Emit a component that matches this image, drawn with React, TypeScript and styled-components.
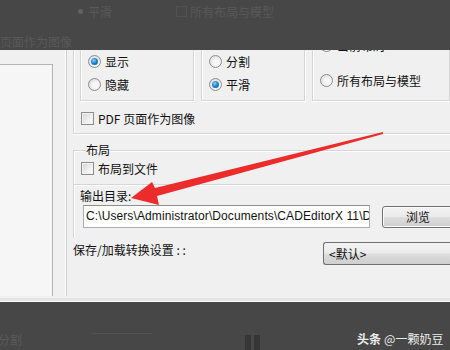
import * as React from 'react';
import styled, { createGlobalStyle } from 'styled-components';

const GlobalStyle = createGlobalStyle`
  html, body { margin: 0; padding: 0; background: #f0f0f0; }
`;

const Page = styled.div`
  position: relative;
  width: 450px;
  height: 350px;
  overflow: hidden;
  display: flex;
  flex-direction: column;
  font-family: "Noto Sans CJK SC", "Liberation Sans", sans-serif;
  font-size: 12px;
  color: #111;
  background: #f0f0f0;
`;

const TopBand = styled.div`
  height: 50px;
  flex: none;
  background: #474747;
  color: #595959;
  display: flex;
  flex-direction: column;
  overflow: hidden;
`;

const BandLine = styled.div<{ $top: number; $left: number }>`
  display: flex;
  align-items: center;
  height: 16px;
  margin-top: ${p => p.$top}px;
  padding-left: ${p => p.$left}px;
  white-space: nowrap;
`;

const FaintDot = styled.span`
  width: 5px;
  height: 5px;
  border-radius: 50%;
  background: #626262;
  margin-right: 5px;
`;

const FaintBox = styled.span`
  width: 9px;
  height: 9px;
  border: 1px solid #525252;
  margin-right: 3px;
`;

const Spacer = styled.span<{ $w: number }>`
  display: inline-block;
  width: ${p => p.$w}px;
`;

const Middle = styled.div`
  flex: none;
  height: 251px;
  display: flex;
  border-bottom: 1px solid #fbfbfb;
  box-shadow: inset 0 -3px 0 #e4e4e4;
  overflow: hidden;
`;

const LeftPane = styled.div`
  width: 52px;
  flex: none;
  margin: 14px 0 5px;
  background: #f6f6f6;
  border-top: 1px solid #b4b4b4;
  border-right: 1px solid #b4b4b4;
`;

const Splitter = styled.div`
  width: 13px;
  flex: none;
  margin-bottom: 5px;
  border-right: 1px solid #cdcdcd;
  box-shadow: inset -1px 0 0 #ffffff;
`;

const Content = styled.div`
  flex: 1;
  display: flex;
  flex-direction: column;
  padding-left: 6px;
  min-width: 0;
`;

const GroupA = styled.div`
  border-left: 1px solid #d5d5d5;
  border-bottom: 1px solid #d5d5d5;
  box-shadow: inset 1px 0 0 #fff, 0 1px 0 #fff;
  padding: 0 0 3px 6px;
`;

const BoxRow = styled.div`
  display: flex;
  gap: 7px;
`;

const SubBox = styled.div<{ $w?: number }>`
  ${p => (p.$w ? `width: ${p.$w}px;` : '')}
  flex: ${p => (p.$w ? 'none' : '1')};
  height: 50px;
  border: 1px solid #d5d5d5;
  border-top: none;
  box-shadow: inset 1px 0 0 #fff, 1px 1px 0 #fff;
  padding-left: 7px;
  white-space: nowrap;
  overflow: hidden;
`;

const OptionRow = styled.div<{ $mt?: number }>`
  display: flex;
  align-items: center;
  gap: 4px;
  height: 23px;
  margin-top: ${p => p.$mt ?? 0}px;
`;

const Radio = styled.span<{ $on?: boolean }>`
  position: relative;
  width: 11px;
  height: 11px;
  border-radius: 50%;
  border: 1px solid #8d8d8d;
  background: radial-gradient(circle at 60% 60%, #f7f7f7 30%, #d2d2d2 100%);
  flex: none;
  &::after {
    content: '';
    display: ${p => (p.$on ? 'block' : 'none')};
    position: absolute;
    left: 2px;
    top: 2px;
    width: 7px;
    height: 7px;
    border-radius: 50%;
    background: radial-gradient(circle at 40% 35%, #8ed3ff 0%, #1f87d0 45%, #0c4f8c 100%);
  }
`;

const Check = styled.span`
  width: 11px;
  height: 11px;
  border: 1px solid #8d8d8d;
  background: linear-gradient(135deg, #d4d4d4 0%, #f4f4f4 70%, #fdfdfd 100%);
  box-shadow: inset 0 0 0 1px #f2f2f2;
  flex: none;
`;

const CheckRow = styled.div<{ $mt?: number }>`
  display: flex;
  align-items: center;
  gap: 4px;
  height: 23px;
  margin-top: ${p => p.$mt ?? 0}px;
  padding-left: 1px;
`;

const GroupB = styled.fieldset`
  margin: 9px 0 0;
  padding: 0 0 4px 6px;
  border: none;
  border-top: 1px solid #d5d5d5;
  border-left: 1px solid #d5d5d5;
  border-bottom: 1px solid #d5d5d5;
  box-shadow: inset 1px 1px 0 #fff, 0 1px 0 #fff;
  min-width: 0;
  & > legend {
    padding: 0;
    margin-left: 6px;
    line-height: 14px;
  }
`;

const OutputGroup = styled.div`
  border-left: 1px solid #d5d5d5;
  box-shadow: inset 1px 0 0 #fff;
  padding: 2px 0 10px 6px;
`;

const FieldLabel = styled.div`
  height: 17px;
  line-height: 17px;
`;

const PathRow = styled.div`
  display: flex;
  align-items: center;
  gap: 12px;
  margin-top: 1px;
  padding-left: 3px;
`;

const PathInput = styled.div`
  width: 283px;
  height: 21px;
  flex: none;
  border: 1px solid #abadb3;
  border-top-color: #8e8f8f;
  background: #fff;
  padding-left: 2px;
  font-family: "Liberation Sans", "Noto Sans CJK SC", sans-serif;
  font-size: 12px;
  letter-spacing: 0.1px;
  line-height: 21px;
  white-space: nowrap;
  overflow: hidden;
`;

const Button = styled.div`
  width: 70px;
  height: 20px;
  flex: none;
  border: 1px solid #707070;
  border-radius: 3px;
  background: linear-gradient(#f3f3f3 0%, #ebebeb 48%, #dddddd 52%, #cfcfcf 100%);
  box-shadow: inset 0 0 0 1px #fbfbfb;
  text-align: center;
  line-height: 20px;
`;

const SettingsRow = styled.div`
  display: flex;
  align-items: flex-start;
  justify-content: space-between;
  padding-top: 4px;
`;

const SettingsLabel = styled.div`
  line-height: 18px;
  margin-top: -1px;
`;

const Combo = styled.div`
  width: 121px;
  height: 21px;
  flex: none;
  border: 1px solid #707070;
  border-right: none;
  border-radius: 3px 0 0 3px;
  background: linear-gradient(#f3f3f3 0%, #ebebeb 48%, #dddddd 52%, #cfcfcf 100%);
  padding-left: 5px;
  line-height: 21px;
`;

const BottomBand = styled.div`
  flex: 1;
  background: #474747;
  color: #5a5a5a;
  display: flex;
  align-items: flex-start;
  padding-top: 28px;
  white-space: nowrap;
  overflow: hidden;
`;

const BandText = styled.span<{ $left: number; $mt?: number }>`
  margin-left: ${p => p.$left}px;
  margin-top: ${p => p.$mt ?? 0}px;
  line-height: 16px;
  flex: none;
`;

const FaintRule = styled.span`
  width: 60px;
  height: 1px;
  margin: 3px 0 0 70px;
  background: #535353;
  flex: none;
`;

const PauseBars = styled.span`
  display: flex;
  gap: 3px;
  margin: 5px 0 0 93px;
  flex: none;
  & > i {
    width: 6px;
    height: 20px;
    background: #363636;
  }
`;

const Watermark = styled.span`
  margin: 1px 0 0 97px;
  color: #ececec;
  font-size: 12px;
  line-height: 16px;
  flex: none;
  & > b {
    font-weight: 700;
    margin-right: 3px;
  }
`;

const Overlay = styled.svg`
  position: absolute;
  left: 0;
  top: 0;
  pointer-events: none;
`;

export default function App(): JSX.Element {
  return (
    <Page>
      <GlobalStyle />
      <TopBand>
        <BandLine $top={3} $left={78}>
          <FaintDot />
          平滑
          <Spacer $w={64} />
          <FaintBox />
          所有布局与模型
        </BandLine>
        <BandLine $top={14} $left={-4}>
          页面作为图像
        </BandLine>
      </TopBand>
      <Middle>
        <LeftPane />
        <Splitter />
        <Content>
          <GroupA>
            <BoxRow>
              <SubBox $w={105}>
                <OptionRow>
                  <Radio $on />
                  显示
                </OptionRow>
                <OptionRow>
                  <Radio />
                  隐藏
                </OptionRow>
              </SubBox>
              <SubBox $w={95}>
                <OptionRow>
                  <Radio />
                  分割
                </OptionRow>
                <OptionRow>
                  <Radio $on />
                  平滑
                </OptionRow>
              </SubBox>
              <SubBox>
                <OptionRow $mt={-16}>
                  <Radio />
                  当前布局
                </OptionRow>
                <OptionRow $mt={12}>
                  <Radio />
                  所有布局与模型
                </OptionRow>
              </SubBox>
            </BoxRow>
            <CheckRow $mt={6}>
              <Check />
              PDF 页面作为图像
            </CheckRow>
          </GroupA>
          <GroupB>
            <legend>布局</legend>
            <CheckRow>
              <Check />
              布局到文件
            </CheckRow>
          </GroupB>
          <OutputGroup>
            <FieldLabel>输出目录:</FieldLabel>
            <PathRow>
              <PathInput>C:\Users\Administrator\Documents\CADEditorX 11\Data</PathInput>
              <Button>浏览</Button>
            </PathRow>
          </OutputGroup>
          <SettingsRow>
            <SettingsLabel>保存/加载转换设置 : :</SettingsLabel>
            <Combo>&lt;默认&gt;</Combo>
          </SettingsRow>
        </Content>
      </Middle>
      <BottomBand>
        <BandText $left={-2} $mt={2}>分割</BandText>
        <FaintRule />
        <PauseBars>
          <i />
          <i />
        </PauseBars>
        <Watermark>
          <b>头条</b>@一颗奶豆
        </Watermark>
      </BottomBand>
      <Overlay width={450} height={350} viewBox="0 0 450 350">
        <polygon
          points="131,198 152,182 155,188 383,132 383,134 157,196 159,205"
          fill="#ec2b2b"
        />
      </Overlay>
    </Page>
  );
}
